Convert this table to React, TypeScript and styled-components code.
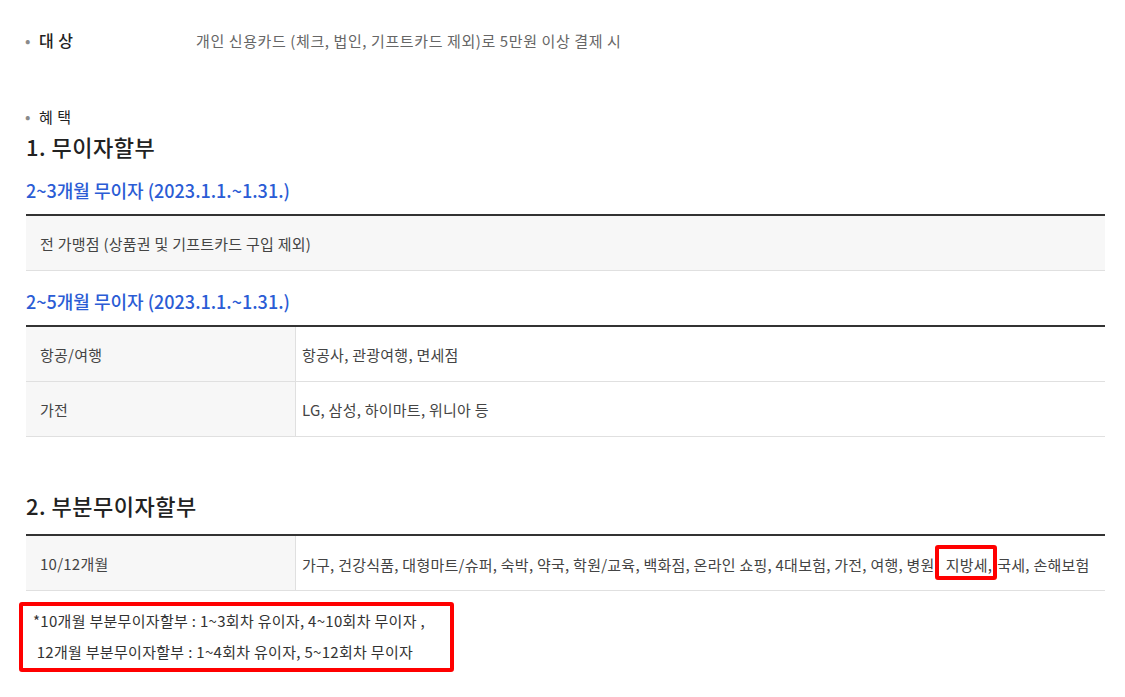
import styled, { createGlobalStyle } from 'styled-components'

const GlobalStyle = createGlobalStyle`
  * { box-sizing: border-box; }
  body {
    margin: 0;
    background: #ffffff;
    font-family: "Noto Sans CJK KR", "Noto Sans", sans-serif;
    color: #333333;
  }
`

const Page = styled.div`
  width: 1105px;
  padding: 27px 0 0 26px;
`

const InfoRow = styled.div<{ $gap: number }>`
  display: flex;
  align-items: center;
  height: 26px;
  margin-bottom: ${(p) => p.$gap}px;
`

const Bullet = styled.span`
  width: 14px;
  font-size: 16px;
  color: #8a8a8a;
  line-height: 1;
  margin-left: -1px;
`

const Label = styled.span<{ $width?: number; $strong?: boolean }>`
  width: ${(p) => (p.$width ? `${p.$width}px` : 'auto')};
  font-size: ${(p) => (p.$strong ? '16px' : '15px')};
  font-weight: ${(p) => (p.$strong ? 500 : 400)};
  color: #222222;
  letter-spacing: 0.5px;
`

const InfoValue = styled.span`
  font-size: 15px;
  color: #666666;
  letter-spacing: 0.6px;
`

const Heading = styled.h2<{ $spaced?: boolean }>`
  margin: ${(p) => (p.$spaced ? '51px 0 12px' : '0')};
  font-size: 22px;
  font-weight: 500;
  color: #222222;
  line-height: 34px;
  letter-spacing: 0.5px;
`

const SubHeading = styled.h3<{ $after?: boolean }>`
  margin: ${(p) => (p.$after ? '18px' : '15px')} 0 12px;
  font-size: 18px;
  font-weight: 500;
  color: #2b5cd5;
  line-height: 24px;
`

const Table = styled.div`
  border-top: 2px solid #333333;
`

const Row = styled.div<{ $cols: number }>`
  display: grid;
  grid-template-columns: ${(p) => (p.$cols === 2 ? '269px 1fr' : '1fr')};
  height: 55px;
  border-bottom: 1px solid #e0e0e0;
`

const Cell = styled.div<{ $head?: boolean }>`
  display: flex;
  align-items: center;
  padding: 0 ${(p) => (p.$head ? '14px' : '6px')};
  font-size: 15px;
  letter-spacing: 0.25px;
  color: #444444;
  white-space: nowrap;
  background: ${(p) => (p.$head ? '#f7f7f7' : '#ffffff')};
  & + & {
    border-left: 1px solid #e0e0e0;
  }
`

const Marked = styled.span`
  display: inline-block;
  position: relative;
  margin: -6px 0 -6px -8px;
  padding: 5px 1px 0 7px;
  border: 4px solid #ff0000;
  border-radius: 3px;
  background: #ffffff;
  line-height: 22px;
`

const Note = styled.div`
  width: 435px;
  margin: 11px 0 0 -7px;
  padding: 0 10px;
  border: 4px solid #ff0000;
  border-radius: 3px;
  font-size: 15px;
  letter-spacing: 0.3px;
  color: #333333;
`

const NoteLine = styled.div<{ $height: number }>`
  line-height: ${(p) => p.$height}px;
`

export default function App() {
  return (
    <Page>
      <GlobalStyle />
      <InfoRow $gap={50}>
        <Bullet>•</Bullet>
        <Label $width={157} $strong>대 상</Label>
        <InfoValue>개인 신용카드 (체크, 법인, 기프트카드 제외)로 5만원 이상 결제 시</InfoValue>
      </InfoRow>
      <InfoRow $gap={0}>
        <Bullet>•</Bullet>
        <Label>혜 택</Label>
      </InfoRow>

      <Heading>1. 무이자할부</Heading>
      <SubHeading>2~3개월 무이자 (2023.1.1.~1.31.)</SubHeading>
      <Table>
        <Row $cols={1}>
          <Cell $head>전 가맹점 (상품권 및 기프트카드 구입 제외)</Cell>
        </Row>
      </Table>

      <SubHeading $after>2~5개월 무이자 (2023.1.1.~1.31.)</SubHeading>
      <Table>
        <Row $cols={2}>
          <Cell $head>항공/여행</Cell>
          <Cell>항공사, 관광여행, 면세점</Cell>
        </Row>
        <Row $cols={2}>
          <Cell $head>가전</Cell>
          <Cell>LG, 삼성, 하이마트, 위니아 등</Cell>
        </Row>
      </Table>

      <Heading $spaced>2. 부분무이자할부</Heading>
      <Table>
        <Row $cols={2}>
          <Cell $head>10/12개월</Cell>
          <Cell>
            <span>
              가구, 건강식품, 대형마트/슈퍼, 숙박, 약국, 학원/교육, 백화점, 온라인 쇼핑, 4대보험, 가전, 여행, 병원,{' '}
              <Marked>지방세,</Marked>국세, 손해보험
            </span>
          </Cell>
        </Row>
      </Table>

      <Note>
        <NoteLine $height={30}>*10개월 부분무이자할부 : 1~3회차 유이자, 4~10회차 무이자 ,</NoteLine>
        <NoteLine $height={32}>&nbsp;12개월 부분무이자할부 : 1~4회차 유이자, 5~12회차 무이자</NoteLine>
      </Note>
    </Page>
  )
}
